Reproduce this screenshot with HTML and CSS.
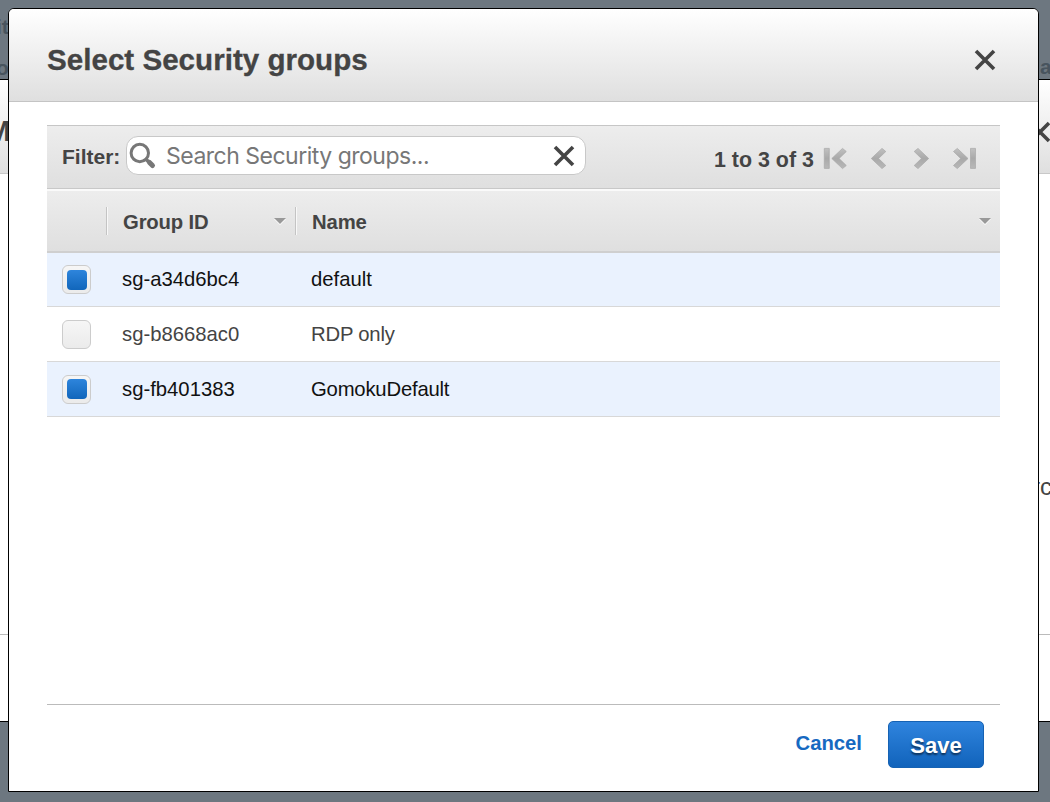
FILE: index.html
```html
<!DOCTYPE html>
<html lang="en">
<head>
<meta charset="utf-8">
<title>Select Security groups</title>
<link rel="stylesheet" href="styles.css">
</head>
<body>
<div class="page">
  <span class="page-text page-text-top">it</span>
  <span class="page-text page-text-left">o</span>
  <span class="page-text page-text-right">a</span>
</div>
<div class="parent-dialog">
  <div class="parent-header">
    <span class="parent-title">M</span>
    <svg class="parent-close" width="22" height="22" viewBox="0 0 22 22"><path d="M2 2l18 18M20 2L2 20"/></svg>
  </div>
  <div class="parent-body"><span class="parent-text">rc</span></div>
  <div class="parent-footer"></div>
</div>
<div class="dialog">
  <header class="dialog-header">
    <h1 class="dialog-title">Select Security groups</h1>
    <svg class="close" width="22" height="22" viewBox="0 0 22 22"><path d="M2 2l18 18M20 2L2 20"/></svg>
  </header>
  <main class="dialog-body">
    <div class="toolbar">
      <label class="filter-label">Filter:</label>
      <div class="search">
        <svg class="search-icon" width="28" height="28" viewBox="0 0 28 28"><circle cx="10.8" cy="11" r="8.7" stroke-width="3"/><path d="M17 17.2l3 3" stroke-width="3.5"/><path d="M20.5 20.5l3 3" stroke-width="5" stroke-linecap="round"/></svg>
        <span class="search-text">Search Security groups...</span>
        <svg class="clear" width="22" height="22" viewBox="0 0 22 22"><path d="M2 2l18 18M20 2L2 20"/></svg>
      </div>
      <span class="count">1 to 3 of 3</span>
      <svg class="pager" width="156" height="24" viewBox="0 0 156 24">
        <defs><linearGradient id="arrow" x1="0" y1="0" x2="0" y2="1"><stop offset="0" stop-color="#c0c0c0"/><stop offset=".5" stop-color="#a9a9a9"/><stop offset="1" stop-color="#b8b8b8"/></linearGradient></defs>
        <g fill="url(#arrow)" stroke="#a8a8a8" stroke-width=".7">
          <path d="M1.3 1.4h5v20h-5z"/>
          <path d="M19.5 1.4l3.8 3.1-7.2 7 7.2 7-3.8 3.1L8.8 11.5z"/>
          <path d="M59 1.4l3.8 3.1-7.2 7 7.2 7-3.8 3.1L48.3 11.5z"/>
          <path d="M95 1.4l-3.8 3.1 7.2 7-7.2 7 3.8 3.1 10.7-10.1z"/>
          <path d="M134.3 1.4l-3.8 3.1 7.2 7-7.2 7 3.8 3.1L145 11.5z"/>
          <path d="M147.5 1.4h5v20h-5z"/>
        </g>
      </svg>
    </div>
    <div class="grid-row grid-head">
      <span></span>
      <span class="head-cell">Group ID<i class="caret"></i></span>
      <span class="head-cell">Name<i class="caret"></i></span>
    </div>
    <div class="grid-row row selected"><span class="check"><i class="mark"></i></span><span>sg-a34d6bc4</span><span>default</span></div>
    <div class="grid-row row"><span class="check"></span><span>sg-b8668ac0</span><span class="tight">RDP only</span></div>
    <div class="grid-row row selected"><span class="check"><i class="mark"></i></span><span>sg-fb401383</span><span class="tight">GomokuDefault</span></div>
  </main>
  <footer class="dialog-footer">
    <a class="cancel">Cancel</a>
    <button class="save">Save</button>
  </footer>
</div>
</body>
</html>
```
FILE: styles.css
```css
* { box-sizing: border-box; }
body {
  margin: 0;
  width: 1050px;
  height: 802px;
  overflow: hidden;
  position: relative;
  background: #6d7780;
  color: #444;
  font-family: "Liberation Sans", Arial, sans-serif;
}
.page-text { position: absolute; font-size: 21px; line-height: 24px; font-weight: bold; color: #48545e; }
.page-text-top { left: -4px; top: 15px; }
.page-text-left { left: -4px; top: 56px; }
.page-text-right { left: 1040px; top: 55px; }
.parent-dialog {
  position: absolute;
  left: -30px;
  top: 79px;
  width: 1110px;
  height: 643px;
  display: flex;
  flex-direction: column;
  background: #fff;
  border: 1px solid #000;
}
.parent-header {
  height: 94px;
  padding: 8px 28px 0 15px;
  display: flex;
  align-items: center;
  justify-content: space-between;
  background: linear-gradient(#fff, #dfdfdf);
  border-bottom: 1px solid #c8c8c8;
}
.parent-title { font-size: 30px; font-weight: bold; }
.parent-close { margin-top: 2px; fill: none; stroke: #444; stroke-width: 3.6; }
.parent-body { flex: 1; padding: 299px 27px 0 0; text-align: right; font-size: 24px; }
.parent-footer { height: 87px; border-top: 1px solid #bbb; }

.dialog {
  position: absolute;
  left: 8px;
  top: 8px;
  width: 1031px;
  height: 784px;
  display: flex;
  flex-direction: column;
  background: #fff;
  border: 1px solid #000;
  border-radius: 6px 6px 0 0;
  overflow: hidden;
}
.dialog-header {
  height: 93px;
  padding: 10px 42px 0 38px;
  display: flex;
  align-items: center;
  justify-content: space-between;
  background: linear-gradient(#fff, #dfdfdf);
  border-bottom: 1px solid #c4c4c4;
}
.dialog-title { margin: 0; font-size: 29.6px; line-height: 34px; -webkit-text-stroke: .3px #444; }
.close, .clear { fill: none; stroke: #444; stroke-width: 3.6; }
.dialog-body { flex: 1; padding: 23px 38px 0; }
.toolbar {
  height: 64px;
  padding-left: 15px;
  display: flex;
  align-items: center;
  background: linear-gradient(#ededed, #dfdfdf);
  border-top: 1px solid #c6c6c6;
  border-bottom: 1px solid #c8c8c8;
}
.filter-label { width: 64px; font-size: 21px; font-weight: bold; }
.search {
  width: 460px;
  height: 39px;
  margin-top: -3px;
  padding: 0 10px 0 2px;
  display: flex;
  align-items: center;
  background: #fff;
  border: 1px solid #c8c8c8;
  border-radius: 12px;
}
.search-icon { fill: none; stroke: #777; }
.search-text { flex: 1; padding-left: 9px; font: 23px/30px Inter, sans-serif; color: #777; letter-spacing: -.5px; white-space: nowrap; }
.count { width: 109px; margin: 7px 0 0 128px; font-size: 21.4px; font-weight: bold; white-space: nowrap; }
.pager { margin-top: 3px; flex: none; }
.grid-row { display: grid; grid-template-columns: 59px 189px 1fr; align-items: center; }
.grid-head {
  height: 64px;
  background: linear-gradient(#ededed, #dfdfdf);
  border-top: 2px solid #fafafa;
  border-bottom: 2px solid #cfcfcf;
  font-size: 20.3px;
  font-weight: bold;
}
.head-cell {
  height: 28px;
  padding: 2px 9px 0 16px;
  display: flex;
  align-items: center;
  justify-content: space-between;
  border-left: 1px solid #c4c4c4;
  box-shadow: inset 1px 0 #f8f8f8;
  letter-spacing: -.15px;
}
.caret { margin-top: -2px; border: 6px solid transparent; border-top-color: #999; border-bottom: 0; filter: drop-shadow(0 1px #fff); }
.row { height: 55px; border-bottom: 1px solid #d8d8d8; font-size: 20.3px; }
.grid-head + .row { height: 54px; }
.row span + span { padding-left: 16px; }
.row .tight { letter-spacing: -.2px; }
.selected { background: #eaf2fe; color: #111; }
.check {
  width: 29px;
  height: 29px;
  margin-left: 15px;
  display: grid;
  place-items: center;
  background: linear-gradient(#f6f6f6, #ebebeb);
  border: 1px solid #ccc;
  border-radius: 6px;
}
.mark { width: 20px; height: 20px; background: linear-gradient(#2e85dc, #1166bb); border-radius: 4px; }
.dialog-footer {
  height: 87px;
  margin: 0 38px;
  padding: 16px 16px 0 0;
  display: flex;
  justify-content: flex-end;
  align-items: flex-start;
  gap: 26px;
  border-top: 1px solid #bbb;
}
.cancel { padding-top: 10px; font-size: 20.3px; line-height: 24px; font-weight: bold; color: #1669c1; }
.save {
  width: 96px;
  height: 47px;
  padding: 2px 0 0;
  border: 1px solid #1662b3;
  border-radius: 5px;
  background: linear-gradient(#2f84de, #1163bb);
  color: #fff;
  font: bold 22px "Liberation Sans", Arial, sans-serif;
  text-shadow: 0 2px 2px rgba(0, 0, 0, .55);
}
```
